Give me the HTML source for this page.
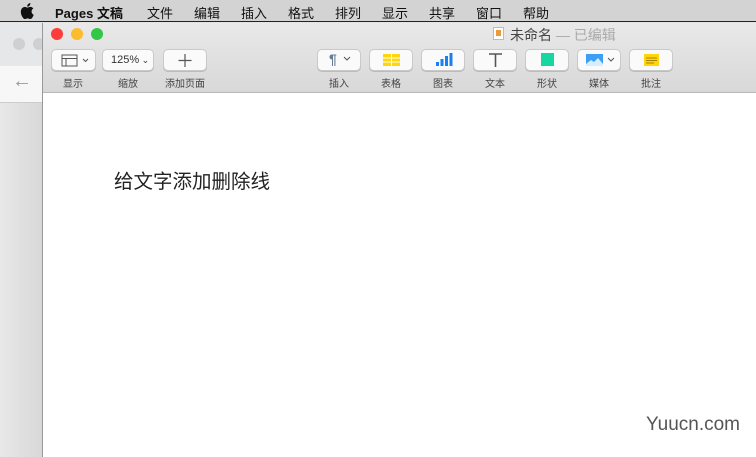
<!DOCTYPE html><html><head><meta charset="utf-8"><style>
*{margin:0;padding:0;box-sizing:border-box}
body{width:756px;height:457px;overflow:hidden;position:relative;font-family:"Liberation Sans","Noto Sans CJK SC",sans-serif;background:#e4e4e4}
.menu{position:absolute;left:0;top:0;width:756px;height:22px;background:#d3d3d3;border-bottom:1px solid #222;font-size:13px;color:#111}
.menu span{position:absolute;top:3px}
.bw{position:absolute;left:0;top:23px;width:42px;height:434px;background:linear-gradient(90deg,#e8e8e8,#d8d8d8)}
.bwt{position:absolute;left:0;top:23px;width:42px;height:43px;background:#e6e7e9}
.bwn{position:absolute;left:0;top:66px;width:42px;height:37px;background:#f7f7f7;border-bottom:1px solid #ccc}
.win{position:absolute;left:42px;top:23px;width:714px;height:434px;background:#fff;border-left:1px solid #999}
.tb{position:absolute;left:0;top:0;width:714px;height:70px;background:linear-gradient(#e9e9e9,#d8d8d8);border-bottom:1px solid #b8b8b8}
.dot{position:absolute;top:5px;width:12px;height:12px;border-radius:50%}
.b{position:absolute;top:26px;height:22px;background:#fafafa;border:1px solid #c9c9c9;border-radius:5px;box-shadow:0 1px 0 #bbb}
.l{position:absolute;top:52px;font-size:10px;color:#444;text-align:center;width:60px}
</style></head><body>
<div class="menu">
<svg style="position:absolute;left:20px;top:3px" width="14" height="16" viewBox="0 0 14 16"><path d="M11.6 8.5c0-2 1.6-2.9 1.7-3-1-1.4-2.4-1.6-2.9-1.6-1.2-.1-2.4.7-3 .7s-1.6-.7-2.6-.7C3.5 4 2.2 4.8 1.5 6c-1.4 2.5-.4 6.1 1 8.1.7 1 1.4 2 2.5 2s1.4-.7 2.6-.7 1.6.7 2.6.7 1.8-1 2.4-2c.8-1.1 1.1-2.2 1.1-2.3 0 0-2.1-.8-2.1-3.3zM9.6 2.6c.5-.7.9-1.6.8-2.6-.8 0-1.8.5-2.4 1.2-.5.6-1 1.5-.8 2.4.9.1 1.8-.4 2.4-1z" fill="#111"/></svg>
<span style="left:55px;font-weight:bold">Pages 文稿</span>
<span style="left:147px">文件</span><span style="left:194px">编辑</span><span style="left:241px">插入</span><span style="left:288px">格式</span><span style="left:335px">排列</span><span style="left:382px">显示</span><span style="left:429px">共享</span><span style="left:476px">窗口</span><span style="left:523px">帮助</span>
</div>
<div class="bw"></div><div class="bwt"></div><div class="bwn"></div>
<div style="position:absolute;left:13px;top:38px;width:12px;height:12px;border-radius:50%;background:#d0d0d0"></div>
<div style="position:absolute;left:33px;top:38px;width:12px;height:12px;border-radius:50%;background:#d0d0d0"></div>
<div style="position:absolute;left:12px;top:70px;font-size:20px;color:#999">←</div>
<div class="win">
<div class="tb">
<div class="dot" style="left:8px;background:#fc3d39"></div>
<div class="dot" style="left:28px;background:#fdbc2c"></div>
<div class="dot" style="left:48px;background:#33c748"></div>
<div style="position:absolute;left:450px;top:4px;width:11px;height:13px;background:#fff;border:1px solid #bbb"><div style="margin:2px;width:5px;height:6px;background:#e99a3a"></div></div>
<div style="position:absolute;left:467px;top:2px;font-size:14px;color:#444">未命名 <span style="color:#aaa">— 已编辑</span></div>
<div class="b" style="left:8px;width:45px"><svg width="43" height="20"><rect x="10" y="5" width="15" height="11" fill="none" stroke="#555"/><line x1="10" y1="8.5" x2="25" y2="8.5" stroke="#555"/><line x1="14" y1="8.5" x2="14" y2="16" stroke="#555"/><path d="M31 9l2.5 2.5 2.5-2.5" fill="none" stroke="#555"/></svg></div>
<div class="b" style="left:59px;width:52px;font-size:11px;color:#333;padding:4px 0 0 8px">125%<span style="font-size:9px"> ⌄</span></div>
<div class="b" style="left:120px;width:44px"><svg width="42" height="20"><path d="M21 4v13M14.5 10.5h13" stroke="#555" stroke-width="1.2"/></svg></div>
<div class="l" style="left:0">显示</div><div class="l" style="left:55px">缩放</div><div class="l" style="left:112px">添加页面</div>
<div class="b" style="left:274px;width:44px;font-size:14px;color:#6a7c95;padding:1px 0 0 11px;font-weight:bold">¶<svg width="12" height="10" style="margin-left:5px"><path d="M2 3l3 3 3-3" fill="none" stroke="#555"/></svg></div>
<div class="b" style="left:326px;width:44px"><svg width="42" height="20"><rect x="13" y="4" width="17" height="12" fill="#ffd60a"/><path d="M13 8h17M13 12h17M21.5 4v12" stroke="#fff" stroke-width="1"/></svg></div>
<div class="b" style="left:378px;width:44px"><svg width="42" height="20"><rect x="14" y="12" width="3" height="4" fill="#1a7ff0"/><rect x="18.5" y="9" width="3" height="7" fill="#1a7ff0"/><rect x="23" y="6" width="3" height="10" fill="#1a7ff0"/><rect x="27.5" y="3" width="3" height="13" fill="#1a7ff0"/></svg></div>
<div class="b" style="left:430px;width:44px"><svg width="42" height="20"><path d="M15 4h13M21.5 4v13" stroke="#555" stroke-width="1.6"/></svg></div>
<div class="b" style="left:482px;width:44px"><svg width="42" height="20"><rect x="15" y="3" width="13" height="13" fill="#17d7a0"/></svg></div>
<div class="b" style="left:534px;width:44px"><svg width="42" height="20"><rect x="8" y="4" width="17" height="12" fill="#3a9ff5"/><path d="M8 14l5-4 3 2 4-4 5 6v2H8z" fill="#fff" opacity=".8"/><path d="M30 8l3 3 3-3" fill="none" stroke="#555"/></svg></div>
<div class="b" style="left:586px;width:44px"><svg width="42" height="20"><rect x="14" y="4" width="15" height="12" fill="#ffd60a"/><path d="M16 8h11M16 10.5h11M16 13h8" stroke="#8a6a00" stroke-width=".8"/></svg></div>
<div class="l" style="left:266px">插入</div><div class="l" style="left:318px">表格</div><div class="l" style="left:370px">图表</div><div class="l" style="left:422px">文本</div><div class="l" style="left:474px">形状</div><div class="l" style="left:526px">媒体</div><div class="l" style="left:578px">批注</div>
</div>
<div style="position:absolute;left:71px;top:142px;font-size:19.5px;color:#222">给文字添加删除线</div>
<div style="position:absolute;left:603px;top:391px;font-size:19px;color:#555">Yuucn.com</div>
</div>
</body></html>
